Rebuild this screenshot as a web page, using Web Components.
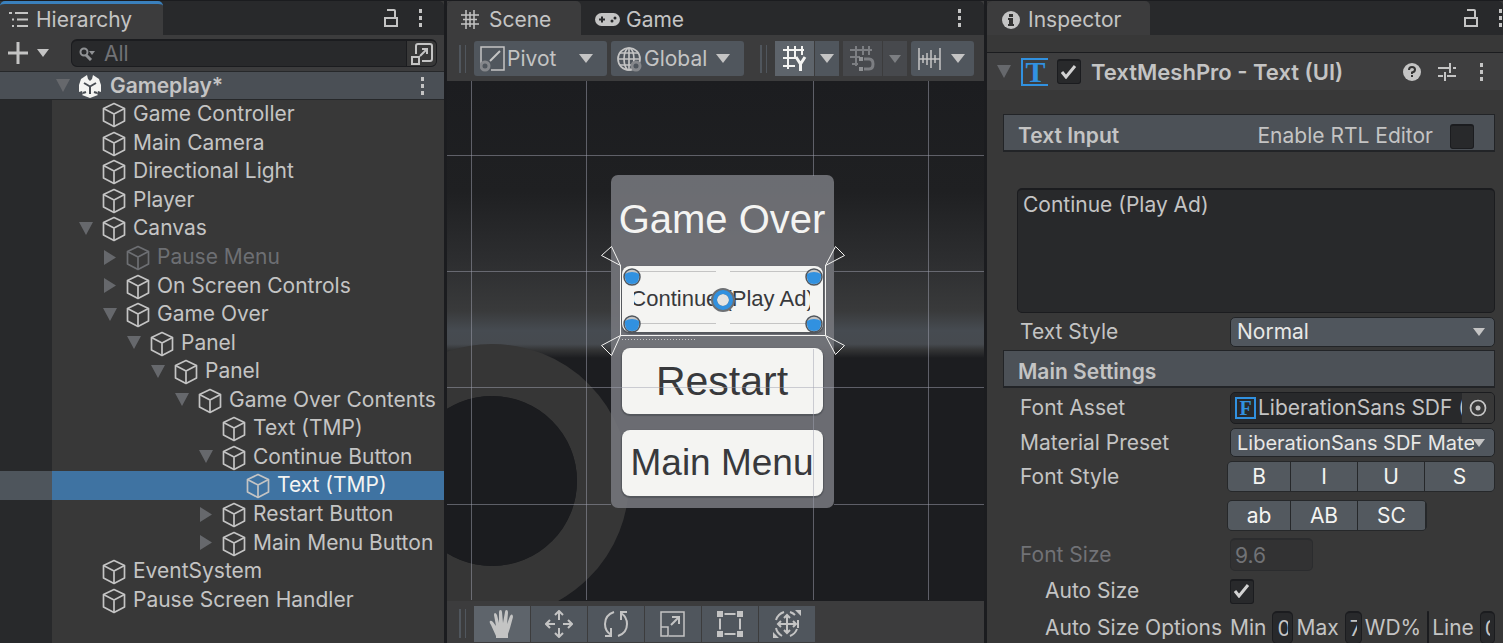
<!DOCTYPE html>
<html lang="en">
<head>
<meta charset="utf-8">
<title>Editor</title>
<style>
  html, body { margin: 0; height: 100%; background: #1b1c1f; }
  body { font-family: Inter, "Liberation Sans", sans-serif; font-size: 21px; line-height: 28px; color: #c4c4c4; overflow: hidden; }
</style>
</head>
<body>
<editor-app></editor-app>
<script>
const define = (name, css, html) => customElements.define(name, class extends HTMLElement {
  connectedCallback() {
    if (this.shadowRoot) return;
    const root = this.attachShadow({ mode: 'open' });
    const t = document.createElement('template');
    t.innerHTML = `<style>*{box-sizing:border-box}${css}</style>` + (typeof html === 'function' ? html(this) : html);
    root.append(t.content.cloneNode(true));
  }
});

const ICONS = {
  list: [20, 18, '<g stroke="#c4c4c4" stroke-width="2"><path d="M0 2h3M6 2h13M3 8.500h2M8 8.500h11M3 15h2M8 15h11"/></g>'],
  lock: [16, 20, '<path d="M4 2h7q1 0 1 1v6M2 10h12v8H2z" fill="none" stroke="#c4c4c4" stroke-width="2"/>'],
  dots: [4, 20, '<path fill="#c4c4c4" d="M0 1h3v4H0zM0 8h3v4H0zM0 15h3v4H0z"/>'],
  plus: [20, 22, '<path d="M10 0v22M0 11h20" stroke="#c4c4c4" stroke-width="3"/>'],
  down: [14, 9, '<path d="M0 0h14L7 9z" fill="currentColor"/>'],
  smalldown: [12, 8, '<path d="M0 0h12L6 8z" fill="currentColor"/>'],
  fold: [14, 13, '<path d="M0 0h14L7 13z" fill="#66686c"/>'],
  folded: [14, 15, '<path d="M1 0l12 7.500L1 15z" fill="#66686c"/>'],
  search: [16, 14, '<circle cx="5" cy="5" r="3.500" fill="none" stroke="#8f9194" stroke-width="2"/><path d="M7 8l5 5" stroke="#8f9194" stroke-width="3"/><path d="M10 4h6l-3 4z" fill="#8f9194"/>'],
  popout: [22, 22, '<g fill="none" stroke="#c4c4c4" stroke-width="2"><path d="M5 11V3q0-2 2-2h12q2 0 2 2v13q0 2-2 2h-8"/><path d="M1 14h7v7H1zM9 13l7-7M11 6h5v5"/></g>'],
  unity: [22, 24, '<path d="M8 1l1 4 2 2 2-2 1-4 6 4 2 6v7l-3-1-1 3 1 1-8 3-8-3 1-1-1-3-3 1v-7l2-6z" fill="#f4f4f2"/><path d="M11 12v8M11 12.500L5 9M11 12.500L17 9" fill="none" stroke="#484d53" stroke-width="2"/><path d="M4 19l3-1M18 19l-3-1" stroke="#484d53" stroke-width="2"/>'],
  cube: [24, 26, '<g fill="none" stroke="currentColor" stroke-width="1.700" stroke-linejoin="round"><path d="M12 1.500l10.500 5v12.500L12 24.500 1.500 19V6.500z"/><path d="M1.500 6.500L12 12l10.500-5.500M12 12v12.500"/></g>'],
  hash: [18, 19, '<path d="M5 0v19M13 0v19M0 5h18M0 14h18M9 2v15M2 9.500h14" stroke="#c4c4c4" stroke-width="1.500"/>'],
  pad: [25, 13, '<rect width="25" height="13" rx="6.500" fill="#c4c4c4"/><path d="M7 3.500v6M4 6.500h6" stroke="#28292b" stroke-width="2"/><circle cx="17" cy="8" r="1.500" fill="#28292b"/><circle cx="20" cy="5" r="1.500" fill="#28292b"/>'],
  pivot: [26, 26, '<path d="M1 18V1h23v23H11" fill="none" stroke="#c4c4c4" stroke-width="1.500"/><path d="M10 15L20 5" stroke="#c4c4c4" stroke-width="2"/><circle cx="5" cy="20" r="4" fill="none" stroke="#85878b" stroke-width="3"/>'],
  globe: [25, 26, '<g fill="none" stroke="#c4c4c4" stroke-width="1.700"><circle cx="12" cy="13" r="11"/><ellipse cx="12" cy="13" rx="5" ry="11"/><path d="M1 13h22M3 7h18M3 19h18M12 2v22"/></g><circle cx="19" cy="20" r="4" fill="#50565d" stroke="#85878b" stroke-width="3"/>'],
  gridY: [25, 27, '<g fill="none" stroke="#f4f4f2" stroke-width="2"><path d="M6 1v23M13 1v12M20 1v9M1 5h21M1 13h13M1 21h12"/><path d="M14 12l4.500 7 4.500-7M18.500 18v8" stroke-width="3"/></g>'],
  snap: [25, 27, '<g fill="none" stroke="#7c7e82" stroke-width="2"><path d="M6 1v20M13 1v9M19 1v9M0 5h22M0 12h10M2 19h6"/><path d="M14 14h5q4 0 4 5t-4 5h-5" stroke-width="3"/></g><path d="M9 12h4v4H9zM9 22h4v4H9z" fill="#8f9194"/>'],
  ruler: [23, 24, '<path d="M1 1v22M5 8v8M9 6v12M13 3v18M17 8v8M22 1v22M1 12h21" stroke="#c4c4c4" stroke-width="1.500"/>'],
  hand: [26, 28, '<path d="M7 26L2 15Q0 12 1 11t3 1l3 4L5 5q0-2 1-2t2 2l2 8V2q0-2 1.500-2T13 2l1 11 2-11q0-2 1.500-2T19 3l-1 11 3-8q1-2 2-1.500T24 7l-3 11-2 6v4H7z" fill="#c4c4c4"/>'],
  move: [28, 28, '<path d="M14 10V1M10 5l4-4 4 4M14 18v9M10 23l4 4 4-4M10 14H1M5 10l-4 4 4 4M18 14h9M23 10l4 4-4 4" fill="none" stroke="#c4c4c4" stroke-width="2"/>'],
  rotate: [26, 28, '<g fill="none" stroke="#c4c4c4" stroke-width="2"><path d="M11 2Q2 5 2 14q0 7 6 11M15 26q9-3 9-12 0-7-6-11"/><path d="M2 26h6v-8M24 2h-6v8"/></g>'],
  scale: [26, 26, '<g fill="none" stroke="#c4c4c4"><path d="M1 16V1h23v24H9M1 16h7v9H1z" stroke-width="1.500"/><path d="M11 14l8-8M12 6h7v7" stroke-width="2"/></g>'],
  rect: [26, 26, '<path d="M7.500 3h11M7.500 23h11M3 7.500v11M23 7.500v11" stroke="#c4c4c4" stroke-width="2"/><path fill="#c4c4c4" d="M0 0h6v6H0zM20 0h6v6h-6zM0 20h6v6H0zM20 20h6v6h-6z"/>'],
  transform: [28, 28, '<g fill="none" stroke="#c4c4c4" stroke-width="2"><path d="M14 5v18M5 14h18M11 8l3-3 3 3M11 20l3 3 3-3M8 11l-3 3 3 3M20 11l3 3-3 3"/><path d="M11 2Q5 4 3 10M3 18q1 5 6 8M17 2q3 1 5 3M25 10v8M24 19q-2 5-7 7"/></g><path d="M22 0h6v6zM0 22v6h6z" fill="#c4c4c4"/>'],
  info: [18, 18, '<circle cx="9" cy="9" r="9" fill="#c4c4c4"/><path d="M7 3h4v3H7zM6 7h5v6h1v2H6v-2h1V9H6z" fill="#333"/>'],
  help: [18, 18, '<circle cx="9" cy="9" r="9" fill="#c4c4c4"/><path d="M6 7q0-3 3-3t3 2.500T9 9.500V11" fill="none" stroke="#333" stroke-width="2"/><path d="M8 12h2v2H8z" fill="#333"/>'],
  sliders: [18, 18, '<path d="M0 5h11M15 5h3M12 0v10M0 13h5M9 13h9M7 9v9" stroke="#c4c4c4" stroke-width="2"/>'],
  check: [16, 14, '<path d="M1 7l4 5L14 1" fill="none" stroke="#d2d2d2" stroke-width="3"/>'],
  target: [18, 18, '<circle cx="9" cy="9" r="7.500" fill="none" stroke="#c4c4c4" stroke-width="1.700"/><circle cx="9" cy="9" r="2.500" fill="#c4c4c4"/>']
};
define('ui-icon', ':host{display:inline-flex;flex:none}svg{display:block}', el => {
  const [w, h, body] = ICONS[el.getAttribute('name')];
  return `<svg width="${w}" height="${h}" viewBox="0 0 ${w} ${h}" aria-hidden="true">${body}</svg>`;
});

define('panel-tab', `
  :host{display:block}
  button{display:flex;align-items:center;gap:var(--gap,8px);height:34px;width:100%;padding:0 10px 0 var(--pad,9px);border:0;border-top:3px solid transparent;
    background:none;color:inherit;font:inherit;border-radius:5px 5px 0 0;text-align:left}
  :host([selected]) button{background:#3c3c3d}
  :host([focused]) button{border-top-color:#3a80bd}
`, '<button type="button" role="tab"><slot name="icon"></slot><slot></slot></button>');

define('tab-bar', `
  :host{display:flex;flex:none;background:#28292b;height:34px;border-radius:5px 5px 0 0;align-items:center}
  .end{margin-left:auto;display:flex;gap:20px;align-items:center;padding-right:var(--end,21px)}
`, '<slot></slot><span class="end"><slot name="end"></slot></span>');

define('icon-button', `
  :host{display:inline-flex}
  button{display:flex;align-items:center;justify-content:center;border:0;padding:0;background:none;color:inherit;font:inherit;width:100%;height:100%}
`, el => `<button type="button" aria-label="${el.getAttribute('label')}"><ui-icon name="${el.getAttribute('icon')}"></ui-icon></button>`);

define('tree-item', `
  :host{display:grid;grid-template-columns:52px 1fr;min-height:0}
  .gutter{background:#28292b}
  .row{display:flex;align-items:center;padding-left:calc(27px + 24px * var(--level));white-space:nowrap;overflow:hidden}
  .arrow{width:14px;display:flex}
  .cube{margin:2px 7px 0 9px;display:flex}
  :host([off]) .row{color:#6d6f73}
  :host([selected]) .gutter{background:#4e555c}
  :host([selected]) .row{background:#3f73a2}
  .name{line-height:26px}
  :host([selected]) .name{color:#f4f4f2}
`, el => {
  el.style.setProperty('--level', el.getAttribute('level') || 0);
  const s = el.getAttribute('state');
  return `<span class="gutter"></span><span class="row" role="treeitem"><span class="arrow">${s ? `<ui-icon name="${s === 'open' ? 'fold' : 'folded'}"></ui-icon>` : ''}</span><span class="cube"><ui-icon name="cube"></ui-icon></span><span class="name"><slot></slot></span></span>`;
});

define('hierarchy-panel', `
  :host{display:flex;flex-direction:column;background:#383838;min-width:0;min-height:0}
  panel-tab{width:163px;--gap:7px}
  .tools{display:flex;align-items:center;height:36px;flex:none;padding:0 7px 0 8px;background:#3c3c3d}
  .tools .add{display:flex;gap:9px;align-items:center;background:none;border:0;padding:0;margin-right:22px;color:#c4c4c4}
  .search{flex:1;display:flex;align-items:center;height:28px;border:1px solid #1b1c1f;border-top-width:2px;border-radius:6px;background:#28292b;padding-left:7px;overflow:hidden}
  .search input{flex:1;min-width:0;background:none;border:0;outline:0;font:inherit;padding:0 0 0 9px;color:#c4c4c4}
  .search input::placeholder{color:#717276;opacity:1}
  .search icon-button{width:30px;height:28px;background:#383838;border-left:1px solid #1b1c1f}
  .scene{display:flex;flex:none;align-items:center;height:29px;border-top:1px solid #26282a;border-bottom:1px solid #26282a;background:#4a4f55;font-weight:600;padding:0 19px 0 56px}
  .scene ui-icon{margin-right:9px}
  .scene icon-button{margin-left:auto}
  .tree{flex:1;display:grid;grid-auto-rows:1fr;min-height:0}
  .rest{height:30px;width:52px;background:#28292b}
`, `
  <tab-bar><panel-tab selected focused><ui-icon slot="icon" name="list"></ui-icon>Hierarchy</panel-tab>
    <icon-button slot="end" icon="lock" label="Lock"></icon-button><icon-button slot="end" icon="dots" label="Menu"></icon-button></tab-bar>
  <div class="tools">
    <button class="add" type="button" aria-label="Create"><ui-icon name="plus"></ui-icon><ui-icon name="smalldown"></ui-icon></button>
    <div class="search"><ui-icon name="search"></ui-icon><input type="text" placeholder="All" aria-label="Search"><icon-button icon="popout" label="Open search window"></icon-button></div>
  </div>
  <div class="scene"><ui-icon name="fold"></ui-icon><ui-icon name="unity"></ui-icon><span>Gameplay*</span><icon-button icon="dots" label="Scene menu"></icon-button></div>
  <div class="tree" role="tree" aria-label="Scene objects">
    <tree-item level="0">Game Controller</tree-item>
    <tree-item level="0">Main Camera</tree-item>
    <tree-item level="0">Directional Light</tree-item>
    <tree-item level="0">Player</tree-item>
    <tree-item level="0" state="open">Canvas</tree-item>
    <tree-item level="1" state="closed" off>Pause Menu</tree-item>
    <tree-item level="1" state="closed">On Screen Controls</tree-item>
    <tree-item level="1" state="open">Game Over</tree-item>
    <tree-item level="2" state="open">Panel</tree-item>
    <tree-item level="3" state="open">Panel</tree-item>
    <tree-item level="4" state="open">Game Over Contents</tree-item>
    <tree-item level="5">Text (TMP)</tree-item>
    <tree-item level="5" state="open">Continue Button</tree-item>
    <tree-item level="6" selected>Text (TMP)</tree-item>
    <tree-item level="5" state="closed">Restart Button</tree-item>
    <tree-item level="5" state="closed">Main Menu Button</tree-item>
    <tree-item level="0">EventSystem</tree-item>
    <tree-item level="0">Pause Screen Handler</tree-item>
  </div>
  <div class="rest"></div>
`);

define('tool-select', `
  :host{display:grid;grid-template-columns:32px 1fr 28px;align-items:center;width:133px;height:35px;background:#50565d;border-radius:3px}
  .ico{grid-area:1/1;padding-left:6px;display:flex}
  select{grid-area:1/1/2/4;appearance:none;background:none;border:0;outline:0;color:inherit;font:inherit;padding:0 0 0 33px;height:100%;width:100%;margin:0}
  .arr{grid-area:1/3;display:flex;pointer-events:none}
`, el => `<span class="ico"><ui-icon name="${el.getAttribute('icon')}"></ui-icon></span><select aria-label="${el.getAttribute('label')}"><option>${el.getAttribute('value')}</option></select><span class="arr"><ui-icon name="down"></ui-icon></span>`);

define('game-card', `
  :host{display:flex;flex-direction:column;gap:16px;width:223px;height:333px;padding:0 11px 12px;border-radius:7px;
    background:rgba(118,120,125,.88);font-family:"Liberation Sans",Arial,sans-serif;white-space:nowrap}
  h2{margin:0;flex:1;font-weight:400;font-size:40px;line-height:46px;color:#f4f4f2;display:flex;align-items:center;justify-content:center;padding-top:12px}
  button{height:66px;border:0;border-radius:8px;background:#f4f4f2;color:#38393c;font:inherit;font-size:41px;line-height:46px;padding:0;
    display:flex;align-items:center;justify-content:center;box-shadow:0 1px 1px 1px #54575c}
  .mid{font-size:37px}
  .small{font-size:22px;line-height:26px}
  .small span{width:176px;display:flex;justify-content:center;overflow:hidden}
`, '<h2>Game Over</h2><button class="small" type="button"><span>Continue (Play Ad)</span></button><button type="button">Restart</button><button class="mid" type="button">Main Menu</button>');

define('scene-view', `
  :host{display:block;position:relative;overflow:hidden;background:#1c1d20;min-height:0}
  svg{position:absolute;left:50%;top:0;margin-left:-269px;overflow:visible}
  game-card{position:absolute;left:50%;top:94px;margin-left:-105px}
`, () => {
  const handle = (x, y) => `<circle cx="${x}" cy="${y}" r="8" fill="#c4c4c4" stroke="#50565d" stroke-width="1.500"/><path d="M${x - 7} ${y - 3}q3-2 7-2t7 2q1 10-7 10t-7-10z" fill="#3191e0"/>`;
  return `
  <svg width="537" height="519" viewBox="447 81 537 519" aria-hidden="true">
    <defs><linearGradient id="sky" x1="0" y1="0" x2="0" y2="1">
      <stop offset="0" stop-color="#1c1d20"/><stop offset=".4" stop-color="#1f2022"/><stop offset=".65" stop-color="#2d2e30"/><stop offset=".83" stop-color="#393a3b"/>
      <stop offset=".9" stop-color="#464b51"/><stop offset=".95" stop-color="#464a4f"/><stop offset=".97" stop-color="#343536"/><stop offset="1" stop-color="#1c1d20"/></linearGradient></defs>
    <path d="M447 81h539v277H447z" fill="url(#sky)"/>
    <circle cx="492" cy="481" r="111" fill="none" stroke="#363636" stroke-width="52"/>
    <circle cx="492" cy="481" r="85" fill="#1b1c1f"/>
  </svg>
  <game-card></game-card>
  <svg width="537" height="519" viewBox="447 81 537 519" pointer-events="none" aria-hidden="true">
    <path d="M471.500 81v519M586.500 81v519M813.500 81v95M813.500 349v251M928.500 81v519M447 155.500h539M447 271.500h164M834 271.500h152M447 387.500h539M447 504.500h164M834 504.500h152" stroke="#a0a2b0" stroke-opacity=".5" fill="none"/>
    <path d="M636 271.500h80M730 271.500h78M636 323.500h80M730 323.500h78" stroke="#c4c4c4" fill="none"/>
    <path d="M620.500 265v70.500h205V265" fill="none" stroke="#f4f4f2"/>
    <path d="M622 339.500h73" stroke="#c4c4c4" stroke-dasharray="1 2"/>
    <path d="M620.500 265.500l-19-10 10-9zM825.500 265.500l10-19 9 9zM620.500 335.500l-19 10 10 10zM825.500 335.500l10 19 9-9z" fill="none" stroke="#f4f4f2"/>
    ${handle(632, 277)}${handle(814, 277)}${handle(632, 324)}${handle(814, 324)}
    <circle cx="723" cy="300" r="9" fill="#e4e4e2" stroke="#6d7074" stroke-width="6"/>
    <circle cx="723" cy="300" r="8" fill="none" stroke="#3191e0" stroke-width="4"/>
  </svg>`;
});

define('scene-panel', `
  :host{display:flex;flex-direction:column;background:#3c3c3d;min-width:0;min-height:0}
  .t1{width:134px;--gap:10px}.t2{width:120px;--gap:6px}
  panel-tab{--pad:14px}
  .bar{display:flex;flex:none;align-items:center;height:46px;padding:1px 7px 0 12px}
  .grip{width:7px;height:28px;border:1px solid #50565d;border-width:0 1px 0 2px;margin-right:8px;flex:none}
  tool-select + tool-select{margin-left:4px}
  .grip2{margin:0 8px 0 16px}
  .b{height:35px;background:#50565d;width:39px}
  .a{width:24px;margin:0 4px 0 1px}
  .on{background:#5e646b}
  .off{background:#47494d;color:#7c7e82}
  .last{display:flex;align-items:center;justify-content:space-between;width:63px;height:35px;padding:0 9px 0 7px;background:#50565d;border:0;border-radius:3px;color:#c4c4c4}
  scene-view{flex:1}
  .bottom{height:43px;padding:2px 7px 0 12px}
  .bottom .b{width:56px;height:36px;margin-right:1px}
  .bottom .grip{height:29px}
`, `
  <tab-bar style="--end:22px"><panel-tab class="t1" selected><ui-icon slot="icon" name="hash"></ui-icon>Scene</panel-tab><panel-tab class="t2"><ui-icon slot="icon" name="pad"></ui-icon>Game</panel-tab>
    <icon-button slot="end" icon="dots" label="Menu"></icon-button></tab-bar>
  <div class="bar">
    <span class="grip"></span>
    <tool-select icon="pivot" label="Handle position" value="Pivot"></tool-select>
    <tool-select icon="globe" label="Handle rotation" value="Global"></tool-select>
    <span class="grip grip2"></span>
    <icon-button class="b on" icon="gridY" label="Grid"></icon-button><icon-button class="b a" icon="down" label="Grid options"></icon-button>
    <icon-button class="b off" icon="snap" label="Snap"></icon-button><icon-button class="b a off" icon="smalldown" label="Snap options"></icon-button>
    <button class="last" type="button" aria-label="Increment snap"><ui-icon name="ruler"></ui-icon><ui-icon name="down"></ui-icon></button>
  </div>
  <scene-view></scene-view>
  <div class="bar bottom">
    <span class="grip"></span>
    <icon-button class="b on" icon="hand" label="View"></icon-button><icon-button class="b" icon="move" label="Move"></icon-button><icon-button class="b" icon="rotate" label="Rotate"></icon-button><icon-button class="b" icon="scale" label="Scale"></icon-button><icon-button class="b" icon="rect" label="Rect"></icon-button><icon-button class="b" icon="transform" label="Transform"></icon-button>
  </div>
`);

define('check-box', `
  :host{display:inline-flex}
  label{display:flex;align-items:center;gap:17px}
  .box{display:grid;place-items:center}
  input{grid-area:1/1;appearance:none;margin:0;width:24px;height:25px;background:#28292b;border:1px solid #1b1c1f;border-top-width:2px;border-radius:3px}
  ui-icon{grid-area:1/1;pointer-events:none;visibility:hidden}
  input:checked + ui-icon{visibility:visible}
`, el => `<label><slot></slot><span class="box"><input type="checkbox" ${el.hasAttribute('checked') ? 'checked' : ''} aria-label="${el.getAttribute('label')}"><ui-icon name="check"></ui-icon></span></label>`);

define('section-title', `
  :host{display:flex;align-items:center;justify-content:space-between;height:38px;margin:0 8px 0 16px;padding:7px 20px 0 14px;background:#4c5157;border:1px solid #222427;border-width:1px 1px 2px}
  b{font-weight:600}
`, '<b><slot></slot></b><slot name="end"></slot>');

define('inspector-panel', `
  :host{display:flex;flex-direction:column;background:#383838;min-width:0;min-height:0;overflow:hidden}
  panel-tab{width:163px;--pad:15px}
  .head,section-title,textarea,.row{flex:none}
  .head{display:flex;align-items:center;height:38px;margin-top:17px;border-top:1px solid #1b1c1f;background:#3e3e3f;padding:0 19px 0 10px}
  .badge{font-family:"Liberation Serif",serif;font-weight:700;color:#3191e0;border:2px solid #3191e0;display:flex;align-items:center;justify-content:center;flex:none}
  .tee{width:27px;height:28px;font-size:30px;line-height:28px;border-right-width:0;margin:0 9px 0 10px}
  .head b{font-weight:600;font-size:22px;margin:0 auto 0 10px}
  .head icon-button + icon-button{margin-left:17px}
  .head icon-button:last-child{margin-left:24px}
  .first{margin-top:24px}
  textarea{display:block;height:125px;margin:36px 8px 4px 30px;background:#28292b;border:1px solid #1b1c1f;border-top-width:2px;border-radius:5px;color:#c4c4c4;font:inherit;padding:1px 5px;resize:none;outline:0}
  .row{display:grid;grid-template-columns:243px 1fr;align-items:center;padding:0 8px 0 0;white-space:nowrap}
  .row > label, .row > .lab{padding-left:33px}
  .sel{display:grid;grid-template-columns:1fr 21px;align-items:center;height:30px;background:#50565d;border:1px solid #222427;border-radius:5px;color:#c4c4c4;min-width:0}
  .sel select{grid-area:1/1/2/3;appearance:none;background:none;border:0;outline:0;color:#e8e8e6;font:inherit;width:100%;height:28px;padding:0 20px 0 6px;min-width:0;text-overflow:clip;line-height:26px}
  .sel ui-icon{grid-area:1/2;pointer-events:none}
  .mat{height:29px}
  .mat select{font-size:20px;height:27px}
  .obj{display:flex;align-items:center;height:32px;background:#28292b;border:1px solid #1b1c1f;border-radius:5px;padding-left:4px;min-width:0;overflow:hidden}
  .eff{width:21px;height:22px;font-size:20px;line-height:18px}
  .obj input{flex:1;min-width:0;border:0;background:none;color:#c4c4c4;font:inherit;padding:0 0 0 2px;outline:0}
  .obj icon-button{width:32px;height:30px;background:#383838}
  .seg{display:grid;grid-template-columns:62px 66px 66px 1fr;gap:1px;height:31px;margin-left:-3px;background:#26282a;border:1px solid #26282a;border-radius:5px;overflow:hidden}
  .seg button{border:0;background:#53595f;color:#f4f4f2;font:inherit;padding:0}
  .short{grid-template-columns:62px 66px 67px;width:200px}
  .num{height:33px;background:#28292b;border:1px solid #1b1c1f;border-top-width:2px;border-radius:5px;color:#c4c4c4;font:inherit;padding:0 4px;outline:0;min-width:0;flex:none}
  .num:disabled{background:#323233;border-color:#2b2c2e;color:#717276;width:83px}
  .dim{color:#717276}
  .row > .in{padding-left:58px}
  .opts{display:flex;align-items:center;gap:3px}
  .opts .num{margin-left:3px}
`, `
  <tab-bar style="--end:0px"><panel-tab selected><ui-icon slot="icon" name="info"></ui-icon>Inspector</panel-tab>
    <icon-button slot="end" icon="lock" label="Lock"></icon-button><icon-button slot="end" icon="dots" label="Menu"></icon-button></tab-bar>
  <div class="head"><ui-icon name="fold"></ui-icon><span class="badge tee">T</span><check-box checked label="Enabled"></check-box><b>TextMeshPro - Text (UI)</b>
    <icon-button icon="help" label="Help"></icon-button><icon-button icon="sliders" label="Presets"></icon-button><icon-button icon="dots" label="Menu"></icon-button></div>
  <section-title class="first">Text Input<check-box slot="end" label="Enable RTL Editor">Enable RTL Editor</check-box></section-title>
  <textarea aria-label="Text">Continue (Play Ad)</textarea>
  <div class="row"><label for="style">Text Style</label><span class="sel"><select id="style"><option>Normal</option></select><ui-icon name="smalldown"></ui-icon></span></div>
  <section-title style="margin-top:3px">Main Settings</section-title>
  <div class="row" style="margin-top:4px"><label for="font">Font Asset</label><span class="obj"><span class="badge eff">F</span><input id="font" readonly value="LiberationSans SDF (TMP_Font Asset)"><icon-button icon="target" label="Pick asset"></icon-button></span></div>
  <div class="row" style="margin-top:4px"><label for="mat">Material Preset</label><span class="sel mat"><select id="mat"><option>LiberationSans SDF Mate</option></select><ui-icon name="smalldown"></ui-icon></span></div>
  <div class="row" style="margin-top:4px"><span class="lab">Font Style</span><span class="seg"><button type="button">B</button><button type="button">I</button><button type="button">U</button><button type="button">S</button></span></div>
  <div class="row" style="margin-top:8px"><span></span><span class="seg short"><button type="button">ab</button><button type="button">AB</button><button type="button">SC</button></span></div>
  <div class="row" style="margin-top:7px"><label class="dim" for="size">Font Size</label><input class="num" id="size" value="9.6" disabled></div>
  <div class="row" style="margin-top:6px"><span class="lab in">Auto Size</span><check-box checked label="Auto Size"></check-box></div>
  <div class="row" style="margin-top:6px"><span class="lab in">Auto Size Options</span><span class="opts">
    <label for="min">Min</label><input class="num" id="min" value="0" style="width:21px"><label for="max">Max</label><input class="num" id="max" value="72" style="width:17px"><label for="wd">WD%</label><input class="num" id="wd" style="width:2px;padding:0;border-width:0 1px"><label for="line">Line</label><input class="num" id="line" value="0" style="width:15px"></span></div>
`);

define('editor-app', `
  :host{display:grid;grid-template-columns:444fr 537fr 516fr;gap:3px;height:100vh;padding-top:1px;background:#1b1c1f}
`, '<hierarchy-panel></hierarchy-panel><scene-panel></scene-panel><inspector-panel></inspector-panel>');
</script>
</body>
</html>
